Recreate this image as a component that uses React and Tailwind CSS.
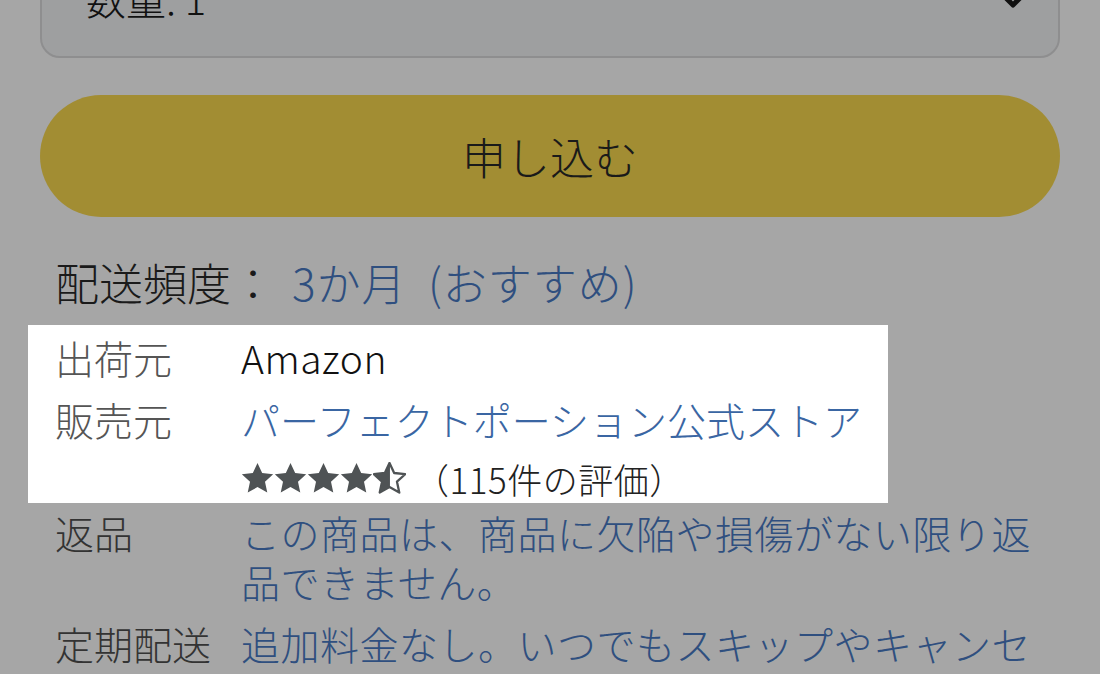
import React from "react";

const font = { fontFamily: '"Noto Sans CJK JP", "Noto Sans", sans-serif' };

function Star({ type }) {
  const d = "M12 1.8l3.05 6.6 7.2.8-5.35 4.9 1.5 7.1L12 17.6l-6.4 3.6 1.5-7.1L1.75 9.2l7.2-.8z";
  if (type === "half") {
    return (
      <svg width="33" height="33" viewBox="1.2 1.2 21.6 21.6">
        <defs>
          <clipPath id="lefthalf">
            <rect x="0" y="0" width="12.3" height="24" />
          </clipPath>
        </defs>
        <path d={d} fill="none" stroke="#4f5355" strokeWidth="1.5" strokeLinejoin="round" />
        <path d={d} fill="#4f5355" clipPath="url(#lefthalf)" />
      </svg>
    );
  }
  return (
    <svg width="33" height="33" viewBox="1.2 1.2 21.6 21.6">
      <path d={d} fill="#4f5355" />
    </svg>
  );
}

export default function App() {
  return (
    <div className="w-[1100px] h-[674px] overflow-hidden bg-[#a6a6a6] font-light" style={font}>
      {/* Quantity select */}
      <div className="mx-[40px] mt-[-62px] h-[120px] rounded-[20px] border-2 border-[#8e8e8f] bg-[#9e9fa0] flex items-center justify-between pl-[44px] pr-[28px]">
        <span className="text-[40px] text-[#111] leading-none">数量: 1</span>
        <svg width="34" height="24" viewBox="0 0 34 24" className="mt-[4px]">
          <path d="M5 5 L17 17 L29 5" fill="none" stroke="#111" strokeWidth="5" strokeLinecap="round" strokeLinejoin="round" />
        </svg>
      </div>

      {/* Button */}
      <div className="mx-[40px] mt-[37px] h-[122px] rounded-full bg-[#a28d33] flex items-center justify-center">
        <span className="text-[44px] text-[#1a1a1a] leading-none">申し込む</span>
      </div>

      {/* Frequency */}
      <div className="mt-[35px] pl-[55px] h-[60px] flex items-center text-[44px] leading-[60px] whitespace-nowrap">
        <span className="text-[#1a1a1a]">配送頻度：</span>
        <span className="text-[#2f4f7f] ml-[17px] tracking-[1px]">3か月&nbsp;&nbsp;(おすすめ)</span>
      </div>

      {/* White highlight box */}
      <div className="mt-[13px] ml-[28px] w-[860px] bg-white pt-[8px] pb-[2px] pl-[27px] text-[39px] leading-[49px]">
        <div className="flex whitespace-nowrap">
          <div className="w-[186px] text-[#555]">出荷元</div>
          <div className="text-[#111] tracking-[0.5px]">Amazon</div>
        </div>
        <div className="flex whitespace-nowrap mt-[13px]">
          <div className="w-[186px] text-[#555]">販売元</div>
          <div className="flex flex-col">
            <div className="text-[#3a66a3]">パーフェクトポーション公式ストア</div>
            <div className="mt-[12px] h-[45px] flex items-center">
              <div className="flex">
                <Star />
                <Star />
                <Star />
                <Star />
                <Star type="half" />
              </div>
              <span className="ml-[8px] text-[35px] tracking-[0.5px] text-[#222] leading-none">（115件の評価）</span>
            </div>
          </div>
        </div>
      </div>

      {/* Return policy */}
      <div className="mt-[5px] pl-[55px] text-[39px] leading-[49px]">
        <div className="flex whitespace-nowrap">
          <div className="w-[186px] text-[#333]">返品</div>
          <div className="text-[#2f4f7f] tracking-[0.5px]">
            この商品は、商品に欠陥や損傷がない限り返
            <br />
            品できません。
          </div>
        </div>
        <div className="flex whitespace-nowrap mt-[13px]">
          <div className="w-[186px] text-[#333]">定期配送</div>
          <div className="text-[#2f4f7f] tracking-[0.5px]">
            追加料金なし。いつでもスキップやキャンセ
            <br />
            ルできます。
          </div>
        </div>
      </div>
    </div>
  );
}
